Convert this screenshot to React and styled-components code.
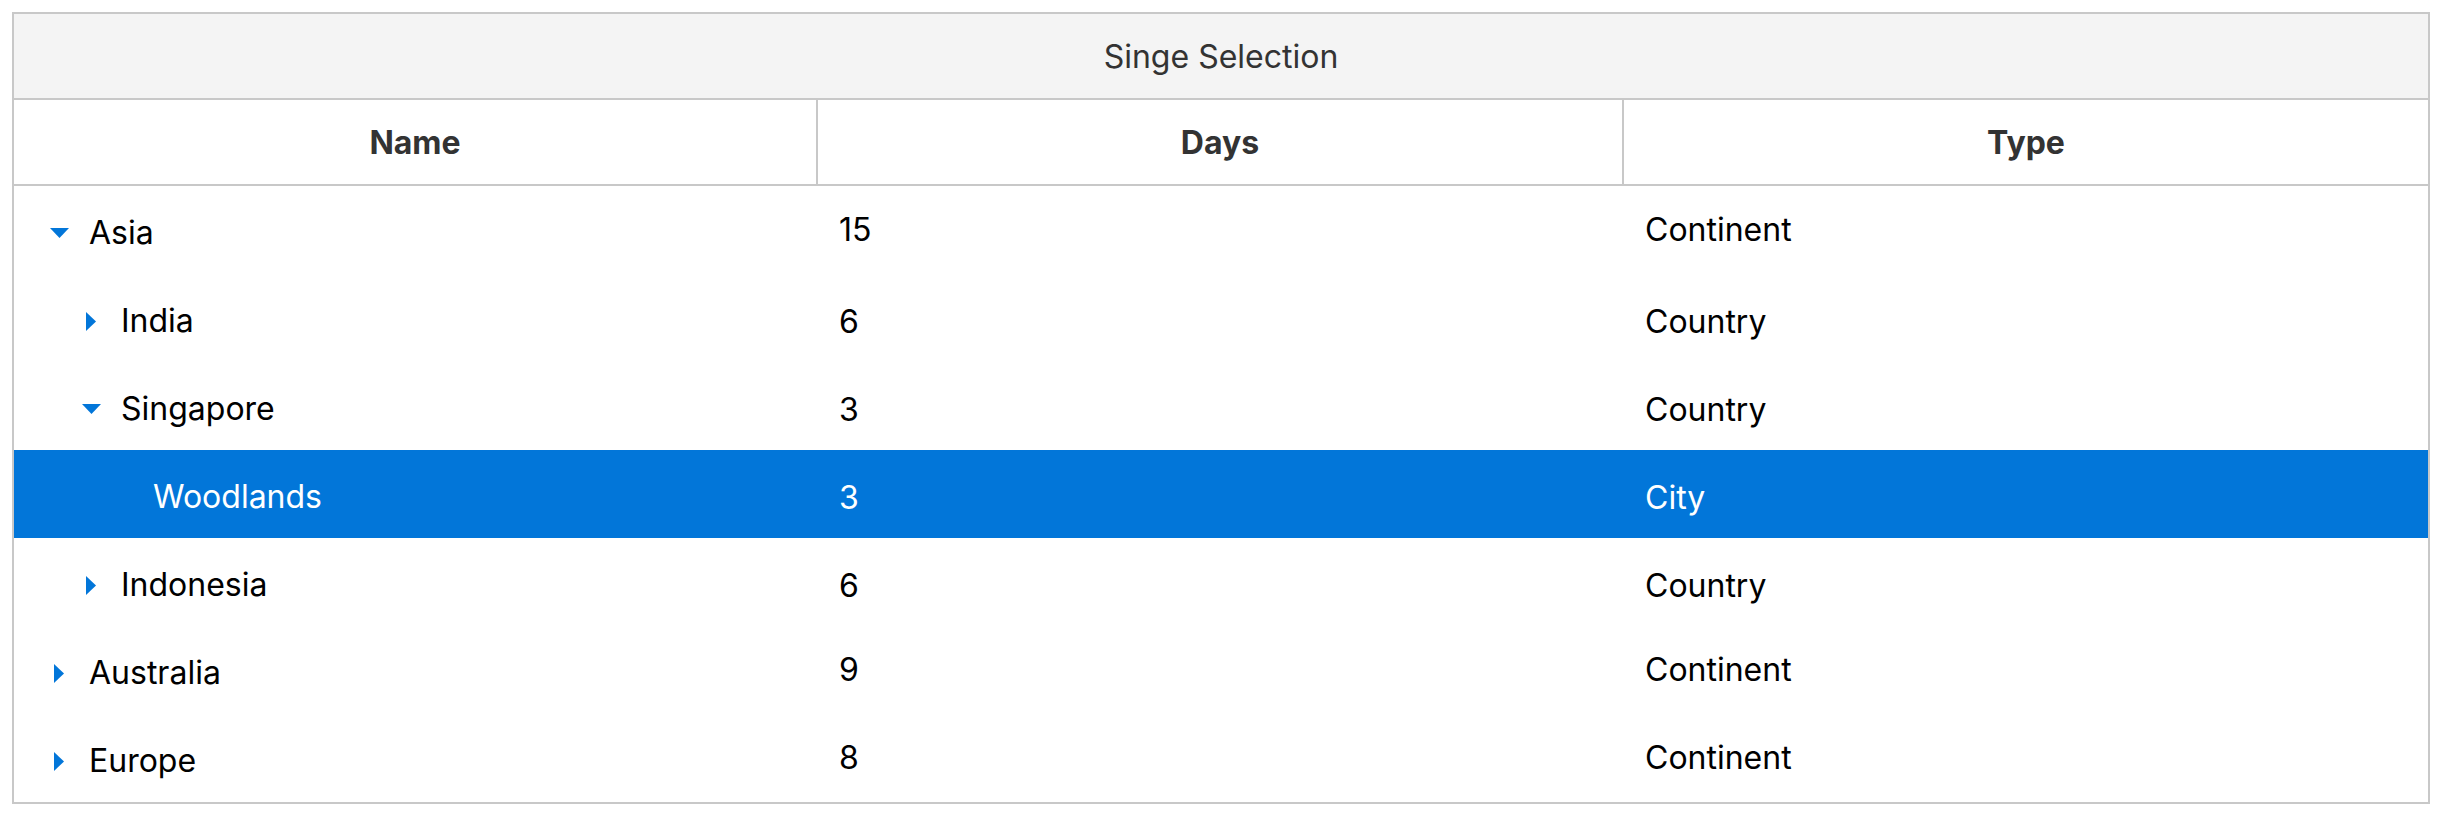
import React from "react";
import styled, { createGlobalStyle } from "styled-components";

const GlobalStyle = createGlobalStyle`
  html, body {
    margin: 0;
    padding: 0;
    background: #ffffff;
  }
  body {
    font-family: Inter, "Noto Sans", "Liberation Sans", sans-serif;
  }
`;

const Page = styled.div`
  padding: 12px 16px 12px 12px;
`;

const Grid = styled.div`
  border: 2px solid #c8c8c8;
  background: #ffffff;
`;

const Caption = styled.div`
  height: 84px;
  display: flex;
  align-items: center;
  justify-content: center;
  background: #f4f4f4;
  border-bottom: 2px solid #c8c8c8;
  color: #333333;
  font-size: 32px;
  font-weight: 400;
`;

const Table = styled.table`
  width: 100%;
  table-layout: fixed;
  border-collapse: separate;
  border-spacing: 0;
`;

const Col = styled.col`
  width: ${(p) => (p.$w ? `${p.$w}px` : "auto")};
`;

const HeadCell = styled.th`
  height: 84px;
  padding: 0;
  box-sizing: content-box;
  text-align: center;
  vertical-align: middle;
  font-size: 32px;
  font-weight: 700;
  color: #333333;
  border-bottom: 2px solid #c8c8c8;
  border-right: ${(p) => (p.$last ? "none" : "2px solid #c8c8c8")};
`;

const Row = styled.tr`
  background: ${(p) => (p.$selected ? "#0276d9" : "#ffffff")};
  color: ${(p) => (p.$selected ? "#ffffff" : "#000000")};
`;

const Cell = styled.td`
  height: 88px;
  box-sizing: border-box;
  padding: ${(p) => (p.$raised ? "0 0 2px 21px" : "6px 0 0 21px")};
  vertical-align: middle;
  font-size: 32px;
  font-weight: 400;
  white-space: nowrap;
  overflow: hidden;
`;

const NameCell = styled.td`
  height: 88px;
  box-sizing: border-box;
  padding: 6px 0 0 29px;
  vertical-align: middle;
  font-size: 32px;
  font-weight: 400;
  white-space: nowrap;
`;

const NameWrap = styled.div`
  display: flex;
  align-items: center;
  padding-left: ${(p) => p.$level * 32}px;
`;

const Toggle = styled.span`
  width: 32px;
  flex: 0 0 32px;
  display: flex;
  align-items: center;
  justify-content: center;
  margin-right: 14px;
  color: #0276d9;
`;

const Label = styled.span`
  line-height: 1;
`;

function Arrow({ expanded }) {
  if (expanded) {
    return (
      <svg width="19" height="10" viewBox="0 0 19 10" aria-hidden="true">
        <polygon points="0,0 19,0 9.5,10" fill="currentColor" />
      </svg>
    );
  }
  return (
    <svg width="10" height="19" viewBox="0 0 10 19" aria-hidden="true">
      <polygon points="0,0 10,9.5 0,19" fill="currentColor" />
    </svg>
  );
}

const rows = [
  { name: "Asia", days: 15, type: "Continent", level: 0, state: "open" },
  { name: "India", days: 6, type: "Country", level: 1, state: "closed" },
  { name: "Singapore", days: 3, type: "Country", level: 1, state: "open" },
  { name: "Woodlands", days: 3, type: "City", level: 2, state: "leaf", selected: true },
  { name: "Indonesia", days: 6, type: "Country", level: 1, state: "closed" },
  { name: "Australia", days: 9, type: "Continent", level: 0, state: "closed" },
  { name: "Europe", days: 8, type: "Continent", level: 0, state: "closed" },
];

export default function App() {
  return (
    <>
      <GlobalStyle />
      <Page>
        <Grid>
          <Caption>Singe Selection</Caption>
          <Table>
            <colgroup>
              <Col $w={804} />
              <Col $w={806} />
              <Col />
            </colgroup>
            <thead>
              <tr>
                <HeadCell>Name</HeadCell>
                <HeadCell>Days</HeadCell>
                <HeadCell $last>Type</HeadCell>
              </tr>
            </thead>
            <tbody>
              {rows.map((r) => (
                <Row key={r.name} $selected={r.selected}>
                  <NameCell>
                    <NameWrap $level={r.level}>
                      <Toggle>
                        {r.state !== "leaf" && <Arrow expanded={r.state === "open"} />}
                      </Toggle>
                      <Label>{r.name}</Label>
                    </NameWrap>
                  </NameCell>
                  <Cell $raised={r.level === 0}>{r.days}</Cell>
                  <Cell $raised={r.level === 0}>{r.type}</Cell>
                </Row>
              ))}
            </tbody>
          </Table>
        </Grid>
      </Page>
    </>
  );
}
